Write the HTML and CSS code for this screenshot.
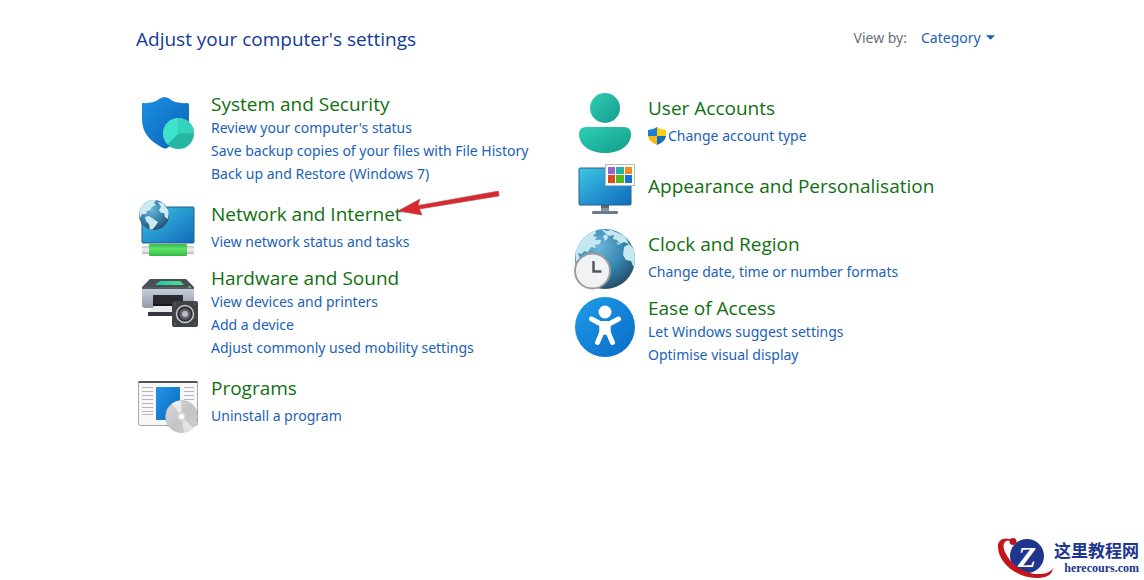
FILE: index.html
```html
<!DOCTYPE html>
<html lang="en">
<head>
    <meta charset="UTF-8">
    <meta name="viewport" content="width=device-width, initial-scale=1.0">
    <title>Control Panel</title>
    <link rel="stylesheet" href="styles.css">
</head>
<body>
    <header class="header">
        <h1>Adjust your computer's settings</h1>
        <div class="view-by">
            <label for="view">View by:</label>
            <div class="view-select">
                <select id="view">
                    <option>Category</option>
                </select>
                <svg class="caret" viewBox="0 0 8 4"><path d="M0 0h8L4 4z" fill="#1a5fb0"/></svg>
            </div>
        </div>
    </header>

    <main class="categories">
        <div class="column">
            <section class="category long">
                <svg class="icon" viewBox="0 0 64 64">
                    <defs>
                        <linearGradient id="shield" x1="0" y1="0" x2="1" y2="1"><stop offset="0" stop-color="#1c8fe3"/><stop offset="1" stop-color="#0a62b8"/></linearGradient>
                    </defs>
                    <path d="M6 15q11 1 18-4.500q4.500-3 9 0q7 5.500 18 4.500q2 0 2 2v14c0 14-10 22-22 29q-2 1-4 0C14 53 6 45 6 31V17z" fill="url(#shield)"/>
                    <circle cx="42.500" cy="45.500" r="15.500" fill="#25b5a3"/>
                    <path d="M42.500 45.500L31.500 56.500A15.500 15.500 0 0 1 42.500 30z" fill="#3fe3cb"/>
                    <path d="M42.500 30A15.500 15.500 0 0 1 58 45.500H42.500z" fill="#37d3bc"/>
                </svg>
                <div class="text">
                    <h2><a href="#">System and Security</a></h2>
                    <ul>
                        <li><a href="#">Review your computer's status</a></li>
                        <li><a href="#">Save backup copies of your files with File History</a></li>
                        <li><a href="#">Back up and Restore (Windows 7)</a></li>
                    </ul>
                </div>
            </section>

            <section class="category single">
                <svg class="icon" viewBox="0 0 64 64">
                    <defs>
                        <linearGradient id="screen" x1="0" y1="0" x2="1" y2="1"><stop offset="0" stop-color="#3cc6e2"/><stop offset="1" stop-color="#1169bd"/></linearGradient>
                        <linearGradient id="cable" x1="0" y1="0" x2="0" y2="1"><stop offset="0" stop-color="#38b54a"/><stop offset=".4" stop-color="#5fe468"/><stop offset="1" stop-color="#35b947"/></linearGradient>
                        <linearGradient id="plug" x1="0" y1="0" x2="0" y2="1"><stop offset="0" stop-color="#c4c4ca"/><stop offset=".5" stop-color="#f5f2f5"/><stop offset="1" stop-color="#b4b2ba"/></linearGradient>
                        <radialGradient id="globe" cx=".4" cy=".3" r=".75"><stop offset="0" stop-color="#6db6db"/><stop offset=".6" stop-color="#327fa9"/><stop offset="1" stop-color="#24485f"/></radialGradient>
                        <clipPath id="small-world"><circle cx="18" cy="17" r="15"/></clipPath>
                    </defs>
                    <rect x="6" y="9" width="52" height="36" rx="1" fill="url(#screen)" stroke="#245a80"/>
                    <rect x="6" y="48" width="52" height="8" rx="1" fill="url(#plug)"/>
                    <rect x="13" y="46" width="38" height="12" rx="1" fill="url(#cable)"/>
                    <circle cx="18" cy="17" r="15" fill="url(#globe)"/>
                    <g clip-path="url(#small-world)" fill="#cdeaf3">
                        <path d="M3 13l4-7 7-4 6 0-2 3 2 2-4 2-2 3-3 1-1 3-4 0-2 4z"/>
                        <path d="M9 19l4-1 6 4 3 2-2 3-3 4-3 1-1-6-3-3z"/>
                        <path d="M22 4l5 1 6 8-1 8-3-2-1-4-3 0-2-3 2-3z"/>
                    </g>
                </svg>
                <div class="text">
                    <h2><a href="#">Network and Internet</a></h2>
                    <ul>
                        <li><a href="#">View network status and tasks</a></li>
                    </ul>
                </div>
                <svg class="arrow" viewBox="0 0 102 28">
                    <path d="M0 20L22 8L20 14.500L100.500 0L101 5L21.500 18L24 24z" fill="#d9292f" stroke="#a64b4b" stroke-width=".6"/>
                </svg>
            </section>

            <section class="category long">
                <svg class="icon" viewBox="0 0 64 64">
                    <defs>
                        <linearGradient id="printer" x1="0" y1="0" x2="0" y2="1"><stop offset="0" stop-color="#c9d0dd"/><stop offset="1" stop-color="#929baa"/></linearGradient>
                        <linearGradient id="tray" x1="0" y1="0" x2="1" y2="0"><stop offset="0" stop-color="#20c5a3"/><stop offset="1" stop-color="#52df95"/></linearGradient>
                    </defs>
                    <path d="M14 17h36l8 8v3H6v-3z" fill="#4a4e55"/>
                    <path d="M24 19h20l4 4H19z" fill="url(#tray)"/>
                    <path d="M6 26h52v17q0 3-3 3H9q-3 0-3-3z" fill="url(#printer)"/>
                    <path d="M6 26h52" stroke="#555b66" stroke-width="2"/>
                    <circle cx="53.500" cy="25" r="1" fill="#61ef79"/>
                    <path d="M17 33h30v11H17z" fill="#292b31"/>
                    <path d="M19 43h27v8H12z" fill="#e5e8ed"/>
                    <path d="M17 42h29v2H17z" fill="#18191d"/>
                    <path d="M12 50h27v4H12z" fill="#34373d"/>
                    <rect x="36" y="39" width="26" height="26" rx="2" fill="#424347"/>
                    <circle cx="49" cy="52" r="8.500" fill="#33353a" stroke="#c7c9cd" stroke-width="1.500"/>
                    <circle cx="49" cy="52" r="5.500" fill="#60636a"/>
                    <circle cx="49" cy="52" r="3" fill="#b8bbc2"/>
                    <g fill="#777"><circle cx="39" cy="42" r=".8"/><circle cx="59" cy="42" r=".8"/><circle cx="39" cy="62" r=".8"/><circle cx="59" cy="62" r=".8"/></g>
                </svg>
                <div class="text">
                    <h2><a href="#">Hardware and Sound</a></h2>
                    <ul>
                        <li><a href="#">View devices and printers</a></li>
                        <li><a href="#">Add a device</a></li>
                        <li><a href="#">Adjust commonly used mobility settings</a></li>
                    </ul>
                </div>
            </section>

            <section class="category single">
                <svg class="icon" viewBox="0 0 64 64">
                    <defs>
                        <linearGradient id="app" x1="0" y1="0" x2="1" y2="1"><stop offset="0" stop-color="#2594e5"/><stop offset="1" stop-color="#0969bd"/></linearGradient>
                        <linearGradient id="disc" x1="0" y1="0" x2="1" y2="1"><stop offset="0" stop-color="#dedede"/><stop offset=".5" stop-color="#c3c4c5"/><stop offset="1" stop-color="#cfd0d1"/></linearGradient>
                    </defs>
                    <rect x="2.500" y="9.500" width="59" height="44" rx="2" fill="#f7f7f8" stroke="#a5a6a8"/>
                    <path d="M2 11q0-2 2-2h56q2 0 2 2z" fill="#4d5155"/>
                    <path d="M6 15.500h11M6 19.500h11M6 23.500h11M6 27.500h11M6 31.500h11M6 35.500h11M6 39.500h11M6 42.500h11M48 15.500h10M48 19.500h10M48 23.500h10M48 27.500h10" stroke="#b4b6b9"/>
                    <rect x="20" y="15" width="24" height="33" fill="url(#app)"/>
                    <circle cx="45.500" cy="44.500" r="16" fill="url(#disc)" stroke="#aaabad" stroke-width=".6"/>
                    <path d="M45.500 44.500L36 31.500q4-3 9-3z" fill="#ebebeb"/>
                    <path d="M45.500 44.500L57 56q-4 4-9 4z" fill="#e3e3e3"/>
                    <circle cx="45.500" cy="44.500" r="4.500" fill="#d7d7d7"/>
                    <circle cx="45.500" cy="44.500" r="2.500" fill="#fff"/>
                </svg>
                <div class="text">
                    <h2><a href="#">Programs</a></h2>
                    <ul>
                        <li><a href="#">Uninstall a program</a></li>
                    </ul>
                </div>
            </section>
        </div>

        <div class="column right">
            <section class="category single">
                <svg class="icon" viewBox="0 0 64 64">
                    <defs>
                        <linearGradient id="user" x1="0" y1="0" x2="1" y2="1"><stop offset="0" stop-color="#2fcfb5"/><stop offset="1" stop-color="#139b89"/></linearGradient>
                    </defs>
                    <circle cx="32" cy="16" r="15" fill="url(#user)"/>
                    <path d="M13 35h38q7 0 7 7c0 12-12 19-26 19S6 54 6 42q0-7 7-7z" fill="url(#user)"/>
                </svg>
                <div class="text">
                    <h2><a href="#">User Accounts</a></h2>
                    <ul>
                        <li>
                            <a href="#" class="admin">
                                <svg class="uac" viewBox="0 0 18 18">
                                    <path d="M9 0Q5 3 0 3v6h9z" fill="#1b7fd6"/>
                                    <path d="M9 0q4 3 9 3v6H9z" fill="#fbd012"/>
                                    <path d="M0 9h9v9Q1 15 0 9z" fill="#f9b916"/>
                                    <path d="M9 9h9q-1 6-9 9z" fill="#126dbe"/>
                                </svg>
                                <span>Change account type</span>
                            </a>
                        </li>
                    </ul>
                </div>
            </section>

            <section class="category title-only">
                <svg class="icon" viewBox="0 0 64 64">
                    <path d="M28 49h8v8h-8z" fill="#89949f"/>
                    <path d="M28 49h8v3h-8z" fill="#5d6871"/>
                    <rect x="19" y="55" width="26" height="3" rx="1" fill="#6e7b88"/>
                    <rect x="6" y="12" width="52" height="37" rx="1" fill="url(#screen)" stroke="#286386"/>
                    <rect x="32.500" y="8.500" width="29" height="21" fill="#fff" stroke="#bbb"/>
                    <path d="M35 11h7v7h-7z" fill="#9666d0"/>
                    <path d="M43 11h8v7h-8z" fill="#24b4a5"/>
                    <path d="M52 11h7v7h-7z" fill="#f18c18"/>
                    <path d="M35 19h7v8h-7z" fill="#df4720"/>
                    <path d="M43 19h8v8h-8z" fill="#56b916"/>
                    <path d="M52 19h7v8h-7z" fill="#1474d2"/>
                </svg>
                <div class="text">
                    <h2><a href="#">Appearance and Personalisation</a></h2>
                </div>
            </section>

            <section class="category single">
                <svg class="icon" viewBox="0 0 64 64">
                    <defs>
                        <clipPath id="world"><circle cx="32" cy="31" r="30"/></clipPath>
                    </defs>
                    <circle cx="32" cy="31" r="30" fill="url(#globe)"/>
                    <g clip-path="url(#world)" fill="#c5e7f1">
                        <path d="M2 22L6 13 14 5l8-3 1 3-3 3 4 1-2 3 6 0-1 4-5 1 1 3-5-1-3 5-4-1-2 3-4-1 2 5-4 4z"/>
                        <path d="M28 1l6 2 4-1 14 6 4 8-5-2-4 2-3-4-4-1 1-4-5 1-4-3z"/>
                        <path d="M51 19l5-3 8 8v16l-4-2-2-5-5-1-3-5z"/>
                        <path d="M30 8l4-2 1 4-3 3zM43 14l4 2-2 1z"/>
                    </g>
                    <circle cx="19.500" cy="43" r="17.500" fill="#f1f2f3" stroke="#9a9da1" stroke-width="2"/>
                    <path d="M20.500 33v10.500h8" fill="none" stroke="#54585d" stroke-width="2.500"/>
                </svg>
                <div class="text">
                    <h2><a href="#">Clock and Region</a></h2>
                    <ul>
                        <li><a href="#">Change date, time or number formats</a></li>
                    </ul>
                </div>
            </section>

            <section class="category">
                <svg class="icon" viewBox="0 0 64 64">
                    <defs>
                        <linearGradient id="access" x1="0" y1="0" x2="1" y2="1"><stop offset="0" stop-color="#209cea"/><stop offset="1" stop-color="#076bc5"/></linearGradient>
                    </defs>
                    <circle cx="32" cy="35" r="30" fill="url(#access)"/>
                    <circle cx="32" cy="20" r="6.500" fill="#fff"/>
                    <path d="M18.500 27l8.500 4.500h10l8.500-4.500M29 34v6l-4.500 10.500M35 34v6l4.500 10.500" fill="none" stroke="#fff" stroke-width="5" stroke-linecap="round" stroke-linejoin="round"/>
                    <path d="M26.500 30h11v11l-5.500 2-5.500-2z" fill="#fff"/>
                </svg>
                <div class="text">
                    <h2><a href="#">Ease of Access</a></h2>
                    <ul>
                        <li><a href="#">Let Windows suggest settings</a></li>
                        <li><a href="#">Optimise visual display</a></li>
                    </ul>
                </div>
            </section>
        </div>
    </main>

    <div class="watermark">
        <svg class="logo" viewBox="0 0 58 42">
            <circle cx="31" cy="19" r="17" fill="#20358e"/>
            <path d="M19 4C9-1 1 2 2 11c1 15 19 30 38 30 9 0 16-2 17-10-3 5-8 6-15 6C28 37 14 27 9 15 6 8 8 3 14 4z" fill="#c6161d"/>
            <circle cx="17" cy="4.500" r="3.500" fill="#b8161d"/>
            <text x="31" y="30" text-anchor="middle">Z</text>
        </svg>
        <div class="site">
            <span class="site-name" lang="zh">这里教程网</span>
            <span class="site-url">herecours.com</span>
        </div>
    </div>
</body>
</html>
```
FILE: styles.css
```css
* {
    box-sizing: border-box;
}
body {
    margin: 0;
    min-height: 100vh;
    position: relative;
    background: #fff;
    font-family: "Noto Sans", "Open Sans", sans-serif;
    font-size: 14px;
    line-height: 23px;
}
h1, h2, ul {
    margin: 0;
    padding: 0;
    font-weight: normal;
}
ul {
    list-style: none;
}
a {
    color: #1a62b7;
    text-decoration: none;
}
a:hover {
    text-decoration: underline;
}
.header {
    display: flex;
    justify-content: space-between;
    align-items: flex-start;
    padding: 24px 149px 0 136px;
}
h1 {
    font-family: "Open Sans", sans-serif;
    font-size: 19px;
    line-height: 30px;
    color: #133a94;
}
.view-by {
    display: flex;
    gap: 14px;
    padding-top: 2px;
    color: #687078;
}
.view-select {
    display: flex;
    align-items: center;
    gap: 5px;
}
.view-select select {
    appearance: none;
    border: none;
    padding: 0;
    background: none;
    font: inherit;
    color: #1a62b7;
    cursor: pointer;
}
.caret {
    width: 9px;
    height: 5px;
}
.categories {
    display: grid;
    grid-template-columns: 1fr 1fr;
    padding: 34px 134px 0 136px;
}
.right {
    padding-top: 4px;
}
.category {
    display: flex;
    gap: 11px;
    position: relative;
    min-height: 64px;
}
.icon {
    flex: none;
    width: 64px;
    height: 64px;
    overflow: visible;
}
.text {
    padding-top: 4px;
}
.long .text {
    padding-bottom: 13px;
}
.single ul {
    padding-top: 4px;
}
.title-only {
    min-height: 72px;
}
.title-only .text {
    padding-top: 18px;
}
h2 {
    font-family: "Open Sans", sans-serif;
    font-size: 19px;
    line-height: 24px;
}
h2 a {
    color: #107010;
}
.admin {
    display: flex;
    align-items: center;
    gap: 2px;
}
.uac {
    width: 18px;
    height: 18px;
}
.arrow {
    position: absolute;
    left: 262px;
    top: -7px;
    width: 102px;
    height: 28px;
}
.watermark {
    position: absolute;
    right: 5px;
    bottom: 1px;
    display: flex;
    align-items: center;
    color: #20358e;
}
.logo {
    width: 58px;
    height: 42px;
}
.logo text {
    font: italic bold 30px "Liberation Serif", serif;
    fill: #fff;
}
.site {
    display: flex;
    flex-direction: column;
    align-items: flex-end;
}
.site-name {
    font: bold 17px/20px "Noto Sans CJK SC", sans-serif;
}
.site-url {
    font: bold 12px/16px "Liberation Serif", serif;
}
```
